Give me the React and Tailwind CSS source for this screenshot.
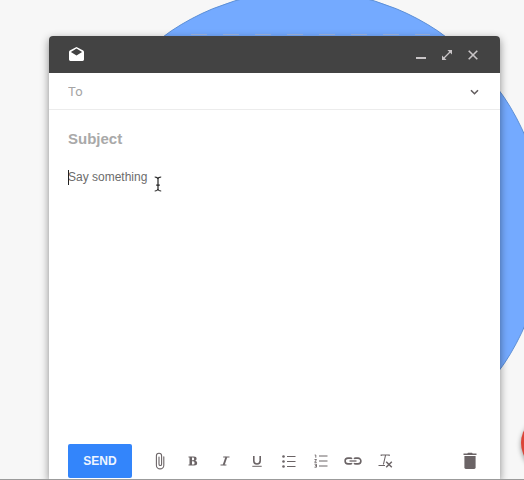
import React from "react";

function IconButton({ label, className = "", children }) {
  return (
    <button
      type="button"
      aria-label={label}
      className={`flex h-6 w-6 shrink-0 items-center justify-center ${className}`}
    >
      {children}
    </button>
  );
}

function TitleBar() {
  return (
    <header className="flex h-[37px] shrink-0 items-center rounded-t bg-[#434343] pr-[15px] pl-5">
      <svg width="15" height="15" viewBox="0 0 15 15" aria-hidden="true">
        <path
          fillRule="evenodd"
          fill="#fff"
          d="M7.5 0.1 L14.2 3.5 Q15 4 15 5 V12.6 Q15 14 13.6 14 H1.4 Q0 14 0 12.6 V5 Q0 4 0.8 3.5 Z M7.5 1.6 L1.9 4.9 L7.5 8.6 L13.1 4.9 Z"
        />
      </svg>
      <div className="ml-auto flex gap-[2px] text-[#c9c5c7]">
        <IconButton label="Minimize">
          <svg width="12" height="12" viewBox="0 0 12 12">
            <path d="M1 9 H11" stroke="currentColor" strokeWidth="2" />
          </svg>
        </IconButton>
        <IconButton label="Full screen">
          <svg width="12" height="12" viewBox="0 0 12 12">
            <path d="M3 9 L9 3" stroke="currentColor" strokeWidth="1.3" />
            <path d="M6.4 1 H11 V5.6 Z M5.6 11 H1 V6.4 Z" fill="currentColor" />
          </svg>
        </IconButton>
        <IconButton label="Close">
          <svg width="12" height="12" viewBox="0 0 12 12">
            <path
              d="M1.7 1.7 L10.3 10.3 M10.3 1.7 L1.7 10.3"
              stroke="currentColor"
              strokeWidth="1.6"
            />
          </svg>
        </IconButton>
      </div>
    </header>
  );
}

function Toolbar() {
  return (
    <footer className="flex h-[35px] shrink-0 items-start pr-[18px] pl-[19px] text-[#6b6466]">
      <button
        type="submit"
        className="h-[34px] w-16 rounded-xs bg-[#3385fb] text-[12px] font-bold text-[#eef5ff]"
      >
        SEND
      </button>
      <div className="ml-[17px] flex h-[34px] items-center gap-2">
        <IconButton label="Attach file">
          <svg width="12" height="18" viewBox="0 0 12 18" fill="none">
            <path
              d="M8.8 4.8 V13.2 A3.7 3.7 0 0 1 1.4 13.2 V3.8 A2.6 2.6 0 0 1 6.6 3.8 V12.2 A1.3 1.3 0 0 1 4 12.2 V5"
              stroke="currentColor"
              strokeWidth="1.1"
              strokeLinecap="round"
            />
          </svg>
        </IconButton>
        <IconButton label="Bold">
          <svg width="10" height="10" viewBox="0 0 10 10">
            <path
              fill="currentColor"
              fillRule="evenodd"
              d="M0.5 0.5 H5.8 Q8.6 0.5 8.6 2.8 Q8.6 4.3 7.2 4.7 Q9.2 5.1 9.2 7 Q9.2 9.5 6.1 9.5 H0.5 V8.6 H1.5 V1.4 H0.5 Z M4 1.5 V4.3 H5 Q6.2 4.3 6.2 2.9 Q6.2 1.5 5 1.5 Z M4 5.3 V8.5 H5.2 Q6.6 8.5 6.6 6.9 Q6.6 5.3 5.2 5.3 Z"
            />
          </svg>
        </IconButton>
        <IconButton label="Italic">
          <svg width="10" height="10" viewBox="0 0 10 10" fill="none">
            <path d="M3.2 1 H9.5 M0.5 9 H6.4" stroke="currentColor" strokeWidth="1.2" />
            <path d="M6.4 1 L3.6 9" stroke="currentColor" strokeWidth="1.9" />
          </svg>
        </IconButton>
        <IconButton label="Underline">
          <svg width="10" height="12" viewBox="0 0 10 12" fill="none">
            <path
              d="M1.8 1 V5.8 A3.2 3.2 0 0 0 8.2 5.8 V1"
              stroke="currentColor"
              strokeWidth="1.6"
            />
            <path d="M0.3 11.3 H9.7" stroke="currentColor" strokeWidth="1" />
          </svg>
        </IconButton>
        <IconButton label="Bulleted list">
          <svg width="14" height="13" viewBox="0 0 14 13" fill="currentColor">
            <circle cx="1.5" cy="1.5" r="1.3" />
            <circle cx="1.5" cy="6.5" r="1.3" />
            <circle cx="1.5" cy="11.5" r="1.3" />
            <path d="M5 1 H13.5 V2 H5 Z M5 6 H13.5 V7 H5 Z M5 11 H13.5 V12 H5 Z" />
          </svg>
        </IconButton>
        <IconButton label="Numbered list">
          <svg width="14" height="14" viewBox="0 0 14 14" fill="none">
            <path d="M5 2 H13.5 M5 7 H13.5 M5 12 H13.5" stroke="currentColor" />
            <path
              d="M0.7 1 H1.8 V3.7 M0.5 5.5 H2.5 L0.7 8.3 H2.8 M0.5 10.2 H2.5 V13.2 H0.5 M1 11.7 H2.5"
              stroke="currentColor"
              strokeWidth="0.9"
            />
          </svg>
        </IconButton>
        <IconButton label="Insert link">
          <svg width="18" height="10" viewBox="0 0 18 10" fill="none">
            <path
              d="M8 7.2 Q7.4 7.9 6.2 7.9 H4 A2.9 2.9 0 0 1 4 2.1 H6.2 Q7.4 2.1 8 2.8 M10 2.8 Q10.6 2.1 11.8 2.1 H14 A2.9 2.9 0 0 1 14 7.9 H11.8 Q10.6 7.9 10 7.2"
              stroke="currentColor"
              strokeWidth="1.6"
            />
            <path d="M5.5 5 H12.5" stroke="currentColor" strokeWidth="1.3" />
          </svg>
        </IconButton>
        <IconButton label="Remove formatting">
          <svg width="15" height="14" viewBox="0 0 15 14" fill="none">
            <path
              d="M3.2 2 V1 H11.2 V2 M7.6 1 L5.4 10.5 M0.5 11.5 H7"
              stroke="currentColor"
              strokeWidth="1.1"
            />
            <path
              d="M8.2 7.8 L13.8 13.2 M13.8 7.8 L8.2 13.2"
              stroke="currentColor"
              strokeWidth="1.5"
            />
          </svg>
        </IconButton>
      </div>
      <div className="ml-auto flex h-[34px] items-center">
        <IconButton label="Discard draft">
          <svg width="14" height="18" viewBox="0 0 14 18" fill="currentColor">
            <path d="M0.5 1.6 H4.3 L5 0.7 H9 L9.7 1.6 H13.5 V3 H0.5 Z" />
            <path d="M1.4 4 H12.6 V15.6 Q12.6 17 11.2 17 H2.8 Q1.4 17 1.4 15.6 Z" />
          </svg>
        </IconButton>
      </div>
    </footer>
  );
}

export default function App() {
  return (
    <main className="relative flex min-h-screen flex-col overflow-hidden border-b border-[#9b9b9b] bg-[#f7f7f7] pt-9 pr-6 pl-[49px] font-['Liberation_Sans',Arial,sans-serif]">
      <div
        aria-hidden="true"
        className="absolute -top-[10px] left-16 h-[481px] w-[481px] rounded-full border border-[#5c8fd6] bg-[#74aaff]"
      />
      <button
        type="button"
        aria-label="Compose"
        className="absolute -right-[53px] bottom-[8px] h-14 w-14 rounded-full bg-[#dc4437] shadow-[0_2px_5px_rgba(0,0,0,0.4)]"
      />
      <form
        onSubmit={(e) => e.preventDefault()}
        className="relative flex flex-1 flex-col rounded-t bg-white shadow-[0_3px_9px_rgba(0,0,0,0.45)]"
      >
        <div
          aria-hidden="true"
          className="absolute -top-[2px] right-[70px] left-[142px] h-px bg-[repeating-linear-gradient(90deg,#93a8cf_0_16px,transparent_16px_32px)]"
        />
        <TitleBar />
        <div className="flex h-[37px] shrink-0 items-center border-b border-[#ececec] pr-[14px] pl-[19px]">
          <input
            type="text"
            aria-label="To"
            placeholder="To"
            className="min-w-0 flex-1 pt-px font-[Roboto,sans-serif] text-[13px] outline-none placeholder:text-[#a5a5a5]"
          />
          <IconButton label="Show Cc and Bcc" className="pt-[2px] text-[#625c5e]">
            <svg width="9" height="7" viewBox="0 0 9 7" fill="none">
              <path d="M1 1.2 L4.5 4.7 L8 1.2" stroke="currentColor" strokeWidth="1.6" />
            </svg>
          </IconButton>
        </div>
        <input
          type="text"
          aria-label="Subject"
          placeholder="Subject"
          className="mx-[19px] mt-[19px] h-5 shrink-0 text-[15px] font-bold outline-none placeholder:text-[#a9a9a9]"
        />
        <div className="relative mx-[19px] mt-[18px] flex flex-1">
          <textarea
            aria-label="Message"
            placeholder="Say something"
            className="flex-1 resize-none text-[12px] leading-5 outline-none placeholder:text-[#6c6c6c]"
          />
          <span aria-hidden="true" className="absolute top-[3px] left-0 h-[15px] w-px bg-[#222]" />
          <svg
            aria-hidden="true"
            className="absolute top-[9px] left-[86px]"
            width="8"
            height="16"
            viewBox="0 0 8 16"
            fill="none"
          >
            <path
              d="M0.7 1 Q3.5 1 3.9 3 Q4.3 1 7.2 1 M4 2.5 V13.5 M0.7 15 Q3.5 15 3.9 13 Q4.3 15 7.2 15 M2.2 9.2 H5.8"
              stroke="#222"
              strokeWidth="1.2"
            />
          </svg>
        </div>
        <Toolbar />
      </form>
    </main>
  );
}
